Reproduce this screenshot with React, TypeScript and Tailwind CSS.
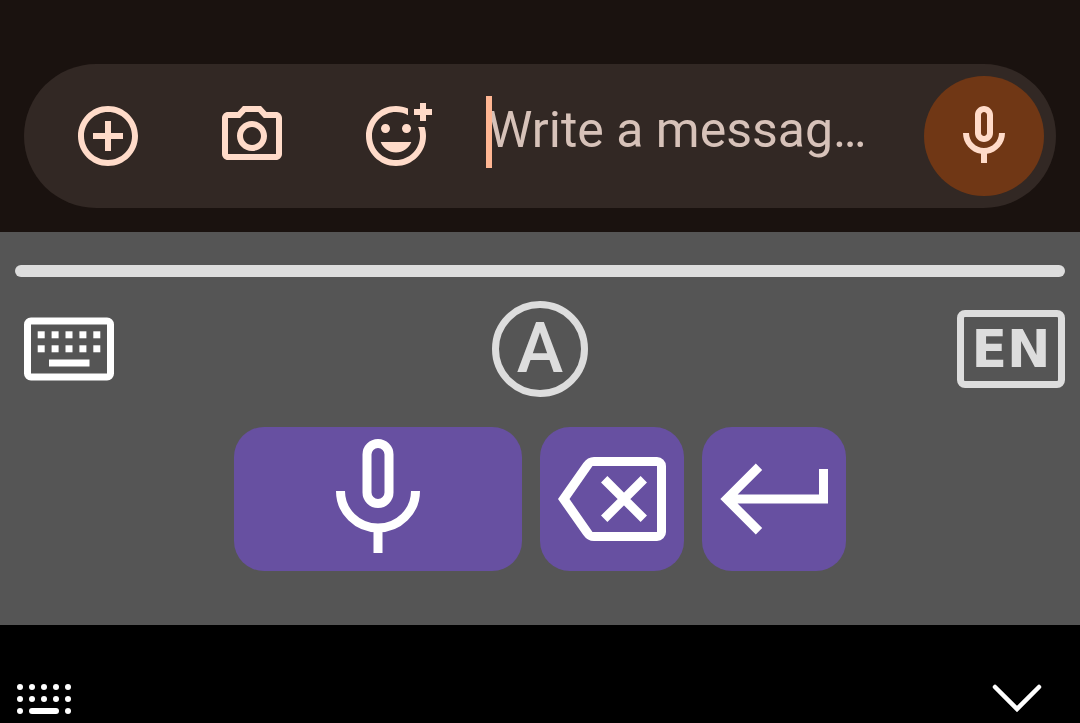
import { useState } from "react";
import type { ReactNode } from "react";

const paths = {
    camera: "M14.12 4l1.83 2H20v12H4V6h4.05l1.83-2h4.24M15 2H9L7.17 4H4c-1.1 0-2 .9-2 2v12c0 1.1.9 2 2 2h16c1.1 0 2-.9 2-2V6c0-1.1-.9-2-2-2h-3.17L15 2zm-3 5c-2.76 0-5 2.24-5 5s2.24 5 5 5 5-2.24 5-5-2.24-5-5-5zm0 8c-1.65 0-3-1.35-3-3s1.35-3 3-3 3 1.35 3 3-1.35 3-3 3z",
    plus: "M13 7h-2v4H7v2h4v4h2v-4h4v-2h-4V7zm-1-5C6.48 2 2 6.48 2 12s4.48 10 10 10 10-4.48 10-10S17.52 2 12 2zm0 18c-4.41 0-8-3.59-8-8s3.59-8 8-8 8 3.59 8 8-3.59 8-8 8z",
    reaction: "M7 9.5C7 8.67 7.67 8 8.5 8s1.5.67 1.5 1.5S9.33 11 8.5 11 7 10.33 7 9.5zm5 8c2.33 0 4.31-1.46 5.11-3.5H6.89c.8 2.04 2.78 3.5 5.11 3.5zM15.5 11c.83 0 1.5-.67 1.5-1.5S16.33 8 15.5 8 14 8.67 14 9.5s.67 1.5 1.5 1.5zM22 1h-2v2h-2v2h2v2h2V5h2V3h-2V1zm-2 11c0 4.42-3.58 8-8 8s-8-3.58-8-8 3.58-8 8-8c1.46 0 2.82.4 4 1.08V2.84C14.77 2.3 13.42 2 11.99 2 6.47 2 2 6.48 2 12s4.47 10 9.99 10C17.52 22 22 17.52 22 12c0-1.05-.17-2.05-.47-3h-2.13c.38.93.6 1.94.6 3z",
    mic: "M12 14c1.66 0 3-1.34 3-3V5c0-1.66-1.34-3-3-3S9 3.34 9 5v6c0 1.66 1.34 3 3 3zm-1-9c0-.55.45-1 1-1s1 .45 1 1v6c0 .55-.45 1-1 1s-1-.45-1-1V5zm6 6c0 2.76-2.24 5-5 5s-5-2.24-5-5H5c0 3.53 2.61 6.43 6 6.92V21h2v-3.08c3.39-.49 6-3.39 6-6.92h-2z",
};

function Icon({ d }: { d: string }) {
    return (
        <svg viewBox="0 0 24 24" className="size-[72px]" fill="currentColor" aria-hidden="true">
            <path d={d} />
        </svg>
    );
}

function ComposerButton({ label, d }: { label: string; d: string }) {
    return (
        <button type="button" aria-label={label} className="flex w-36 shrink-0 items-center justify-center">
            <Icon d={d} />
        </button>
    );
}

function Composer() {
    const [message, setMessage] = useState("");

    return (
        <form
            onSubmit={(e) => e.preventDefault()}
            className="mx-6 mt-16 mb-6 flex h-36 items-center rounded-full bg-[#322824] px-3 text-[#ffdbc9]"
        >
            <ComposerButton label="Add attachment" d={paths.plus} />
            <ComposerButton label="Open camera" d={paths.camera} />
            <ComposerButton label="Add emoji" d={paths.reaction} />
            <div className="relative mb-2 ml-[18px] h-[72px] min-w-0 flex-1">
                <input
                    aria-label="Message"
                    value={message}
                    onChange={(e) => setMessage(e.target.value)}
                    placeholder="Write a messag…"
                    className="h-full w-full pb-1 pl-0.5 text-[50px] text-[#ffdbc9] caret-[#ffb693] outline-none placeholder:text-[#d7c2b9]"
                />
                {message === "" && <span className="absolute inset-y-0 left-0 w-1.5 bg-[#ffb693]" />}
            </div>
            <button
                type="button"
                aria-label="Record voice message"
                className="flex size-[120px] shrink-0 items-center justify-center rounded-full bg-[#703715]"
            >
                <Icon d={paths.mic} />
            </button>
        </form>
    );
}

function KeyboardIcon() {
    return (
        <svg viewBox="0 0 108 64" className="h-16 w-[108px]" fill="currentColor" aria-hidden="true">
            <path
                fillRule="evenodd"
                d="M16 .5h76a7 7 0 0 1 7 7v49a7 7 0 0 1-7 7H16a7 7 0 0 1-7-7v-49a7 7 0 0 1 7-7zM16 7.5v49h76v-49z"
            />
            {[0, 1, 2, 3, 4].map((i) => (
                <g key={i}>
                    <rect x={22.7 + i * 13.9} y="14.3" width="7" height="7" />
                    <rect x={22.7 + i * 13.9} y="28.3" width="7" height="7" />
                </g>
            ))}
            <rect x="34" y="42.5" width="40.5" height="7" />
        </svg>
    );
}

function Key({ label, wide, children }: { label: string; wide?: boolean; children: ReactNode }) {
    return (
        <button
            type="button"
            aria-label={label}
            className={`flex h-36 items-center justify-center rounded-[30px] bg-[#6750a1] text-white ${wide ? "w-72" : "w-36"}`}
        >
            <svg viewBox="0 0 144 144" className="size-36" fill="none" stroke="currentColor" strokeWidth="9" aria-hidden="true">
                {children}
            </svg>
        </button>
    );
}

function VoicePanel() {
    return (
        <section className="bg-[#555555] px-[15px] pt-[33px] pb-[54px]">
            <div className="h-3 rounded-full bg-[#dddddd]" />
            <div className="mt-6 flex items-center justify-between">
                <button type="button" aria-label="Keyboard" className="text-white">
                    <KeyboardIcon />
                </button>
                <button
                    type="button"
                    aria-label="Automatic mode"
                    className="flex size-24 items-center justify-center rounded-full border-[7px] border-[#dddddd] pb-0.5 text-[70px] leading-none font-medium text-[#dddddd]"
                >
                    A
                </button>
                <button
                    type="button"
                    aria-label="Language: EN"
                    className="flex h-[78px] w-[108px] items-center justify-center rounded-lg border-[7px] border-[#dddddd] font-['DejaVu_Sans',sans-serif] text-[52px] leading-none font-bold text-[#dddddd]"
                >
                    EN
                </button>
            </div>
            <div className="mt-[30px] flex justify-center gap-[18px]">
                <Key label="Dictate" wide>
                    <rect x="61" y="16.5" width="22" height="60" rx="11" />
                    <path d="M34.5 64a37.5 37 0 0 0 75 0M72 101v25" />
                </Key>
                <Key label="Backspace">
                    <path
                        fill="currentColor"
                        stroke="none"
                        fillRule="evenodd"
                        d="M18 72L43.3 36Q47.5 30 54 30h63a9 9 0 0 1 9 9v66a9 9 0 0 1-9 9H54q-6.5 0-10.7-6zM29.5 72l23 33H117V39H52.5z"
                    />
                    <path d="M64.2 52.2l39.6 39.6M103.8 52.2L64.2 91.8" />
                </Key>
                <Key label="Enter">
                    <path d="M57 39.7L24.7 72L57 104.3M26 72h95.5V42" />
                </Key>
            </div>
        </section>
    );
}

function SystemBar() {
    return (
        <nav className="flex flex-1 items-start justify-between bg-black px-4 pt-14 text-white">
            <button type="button" aria-label="Switch keyboard">
                <svg viewBox="0 0 56 36" className="h-9 w-14" fill="currentColor" aria-hidden="true">
                    {[4, 16, 28, 40, 52].map((x) => (
                        <g key={x}>
                            <circle cx={x} cy="6" r="3" />
                            <circle cx={x} cy="18" r="3" />
                        </g>
                    ))}
                    <circle cx="4" cy="30" r="3" />
                    <rect x="13" y="27" width="30" height="6" rx="3" />
                    <circle cx="52" cy="30" r="3" />
                </svg>
            </button>
            <button type="button" aria-label="Hide keyboard" className="mr-5">
                <svg viewBox="0 0 54 36" className="h-9 w-[54px]" fill="none" stroke="currentColor" strokeWidth="4.5" strokeLinecap="round" aria-hidden="true">
                    <path d="M5 6l22 22L49 6" />
                </svg>
            </button>
        </nav>
    );
}

export default function App() {
    return (
        <main className="flex min-h-screen flex-col bg-[#1a120f] font-[Roboto,sans-serif]">
            <Composer />
            <VoicePanel />
            <SystemBar />
        </main>
    );
}
